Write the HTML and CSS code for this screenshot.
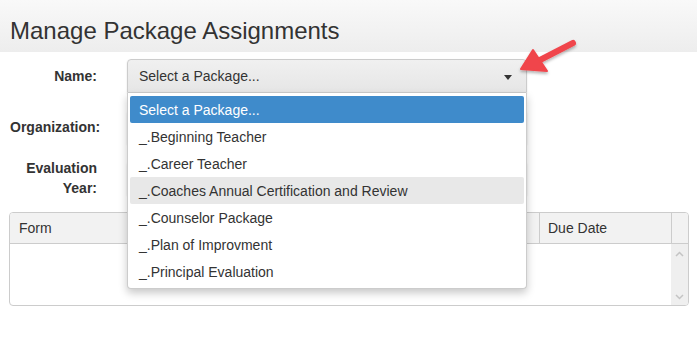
FILE: index.html
```html
<!DOCTYPE html>
<html lang="en">
<head>
    <meta charset="UTF-8">
    <meta name="viewport" content="width=device-width, initial-scale=1.0">
    <title>Manage Package Assignments</title>
    <link rel="stylesheet" href="styles.css">
</head>
<body>
    <div class="page-header">
        <h1>Manage Package Assignments</h1>
    </div>

    <div class="assign-form">
        <div class="form-row">
            <label class="form-label">Name:</label>
            <div class="picker">
                <div class="picker-box">
                    <span>Select a Package...</span>
                    <span class="caret"></span>
                </div>
                <ul class="picker-menu">
                    <li class="active">Select a Package...</li>
                    <li>_.Beginning Teacher</li>
                    <li>_.Career Teacher</li>
                    <li class="hover">_.Coaches Annual Certification and Review</li>
                    <li>_.Counselor Package</li>
                    <li>_.Plan of Improvment</li>
                    <li>_.Principal Evaluation</li>
                </ul>
            </div>
        </div>
        <div class="form-row">
            <label class="form-label">Organization:</label>
            <div class="picker-box"></div>
        </div>
        <div class="form-row">
            <label class="form-label">Evaluation<br>Year:</label>
            <div class="picker-box"></div>
        </div>
    </div>

    <div class="grid">
        <div class="grid-head">
            <div class="col-form">Form</div>
            <div class="col-due">Due Date</div>
            <div class="col-scroll"></div>
        </div>
        <div class="grid-body">
            <div class="grid-rows"></div>
            <div class="scrollbar">
                <svg width="9" height="6" viewBox="0 0 9 6"><path d="M1 5 L4.5 1.5 L8 5" fill="none" stroke="#c4c4c4" stroke-width="1.5"/></svg>
                <svg width="9" height="6" viewBox="0 0 9 6"><path d="M1 1 L4.5 4.5 L8 1" fill="none" stroke="#c4c4c4" stroke-width="1.5"/></svg>
            </div>
        </div>
    </div>

    <!-- callout arrow pointing at the package picker -->
    <svg class="callout" width="697" height="341" viewBox="0 0 697 341">
        <defs>
            <filter id="shade" x="-20%" y="-20%" width="140%" height="160%">
                <feDropShadow dx="0" dy="2" stdDeviation="1.5" flood-color="#000" flood-opacity="0.3"/>
            </filter>
        </defs>
        <g filter="url(#shade)" fill="#f0454b" stroke="#f0454b">
            <path d="M573 43 L540 60" stroke-width="6" stroke-linecap="round"/>
            <path d="M521 69 L533 50 L547 71 Z" stroke-width="2" stroke-linejoin="round"/>
        </g>
    </svg>
</body>
</html>
```

FILE: styles.css
```css
body {
    margin: 0;
    font-family: "Liberation Sans", Arial, sans-serif;
    font-size: 14px;
    color: #333;
    background: #fff;
}
.page-header {
    height: 52px;
    background: linear-gradient(#f9f9f9, #ededed);
    padding-left: 10px;
    box-sizing: border-box;
}
.page-header h1 {
    margin: 0;
    padding-top: 17px;
    font-size: 24px;
    font-weight: normal;
    line-height: 28px;
    color: #333;
}
.assign-form {
    padding-top: 7px;
    display: flex;
    flex-direction: column;
    gap: 17px;
}
.form-row {
    display: flex;
    align-items: center;
    gap: 30px;
    height: 34px;
}
.form-label {
    width: 87px;
    padding-left: 10px;
    padding-bottom: 1px;
    text-align: right;
    font-weight: bold;
    line-height: 20px;
    white-space: nowrap;
}
.picker {
    position: relative;
}
.picker-box {
    width: 400px;
    height: 34px;
    box-sizing: border-box;
    border: 1px solid #ccc;
    border-radius: 4px 4px 0 0;
    background: linear-gradient(#f0f0f0, #e6e6e6);
    box-shadow: 0 1px 2px rgba(0, 0, 0, 0.12);
    display: flex;
    align-items: center;
    justify-content: space-between;
    padding: 0 14px 0 11px;
}
.caret {
    width: 0;
    height: 0;
    border-left: 4px solid transparent;
    border-right: 4px solid transparent;
    border-top: 5px solid #333;
    margin-top: 2px;
}
.picker-menu {
    position: absolute;
    left: 0;
    top: 34px;
    width: 400px;
    box-sizing: border-box;
    margin: 0;
    padding: 3px 2px 3px;
    list-style: none;
    background: #fff;
    border: 1px solid #ccc;
    border-top: none;
    border-radius: 0 0 4px 4px;
    box-shadow: 0 4px 8px rgba(0, 0, 0, 0.22);
    z-index: 5;
}
.picker-menu li {
    height: 27px;
    line-height: 29px;
    padding-left: 9px;
    border-radius: 2px;
}
.picker-menu li.active {
    background: #3f8bcb;
    color: #fff;
}
.picker-menu li.hover {
    background: #e8e8e8;
}
.grid {
    margin: 17px 8px 0 9px;
    border: 1px solid #ccc;
    border-radius: 4px;
    overflow: hidden;
}
.grid-head {
    display: flex;
    height: 30px;
    background: #f2f2f2;
    border-bottom: 1px solid #ccc;
    line-height: 31px;
}
.col-form {
    flex: 1;
    padding-left: 9px;
}
.col-due {
    width: 123px;
    padding-left: 8px;
    border-left: 1px solid #ccc;
}
.col-scroll {
    width: 16px;
    border-left: 1px solid #ccc;
}
.grid-body {
    display: flex;
    height: 61px;
}
.grid-rows {
    flex: 1;
}
.scrollbar {
    width: 17px;
    background: #efefef;
    display: flex;
    flex-direction: column;
    justify-content: space-between;
    align-items: center;
    padding: 7px 0 5px;
    box-sizing: border-box;
}
.callout {
    position: absolute;
    left: 0;
    top: 0;
    pointer-events: none;
    z-index: 10;
}
```
